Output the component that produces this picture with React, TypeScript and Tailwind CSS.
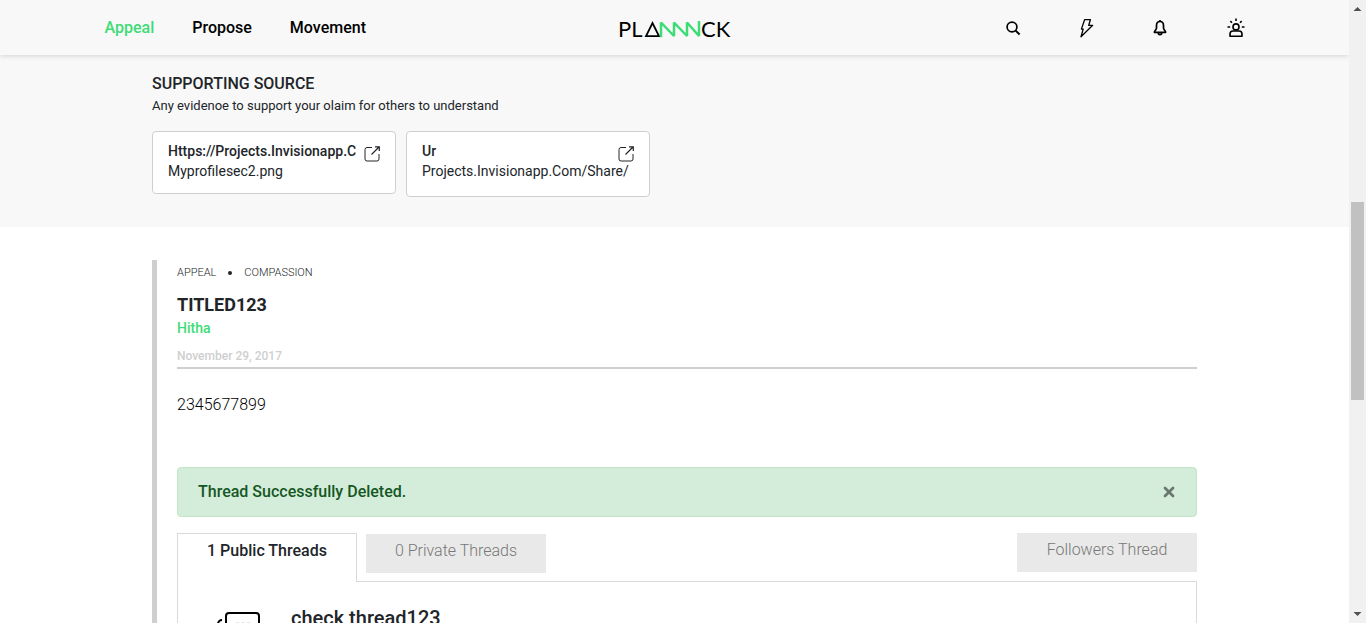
import type { ReactNode } from "react";
import { X } from "lucide-react";

function Logo() {
  return (
    <svg width="113" height="36" viewBox="0 -8 113 36" fill="none" role="img" aria-label="Plannnck">
      <g fill="#000" fontFamily="Lato, sans-serif" fontSize="22">
        <text x="0" y="17">PL</text>
        <text x="83" y="17">CK</text>
      </g>
      <path d="M28 16.200 34.500 3 41 16.200Z" stroke="#000" strokeWidth="1.800" />
      <path
        d="M43 17.200V2.500L56 16V2.500L69 16V2.500L81 16V1"
        stroke="#3ddc76"
        strokeWidth="2.500"
        strokeLinejoin="bevel"
      />
    </svg>
  );
}

function SearchIcon() {
  return (
    <svg width="16" height="20" viewBox="0 0 16 20" fill="none" stroke="#000" strokeWidth="1.700">
      <circle cx="7" cy="9" r="4.900" />
      <path d="m10.600 12.600 4 3.800" strokeWidth="2" />
    </svg>
  );
}

function BoltIcon() {
  return (
    <svg width="16" height="20" viewBox="0 0 16 20" fill="none" stroke="#000" strokeWidth="1.300" strokeLinejoin="round">
      <path d="M5.600 1.700h5.800L9.700 7.300h4L2 18.800l2.200-7.700H2.400Z" />
    </svg>
  );
}

function BellIcon() {
  return (
    <svg width="16" height="20" viewBox="0 0 16 20" fill="none" stroke="#000" strokeWidth="1.700" strokeLinejoin="round">
      <path d="M1.400 14.300c0-1.800 2.100-2.300 2.100-4.200V7.600C3.500 5 4.700 3.500 7 3.500s3.500 1.500 3.500 4.100v2.500c0 1.900 2.100 2.400 2.100 4.200Z" />
      <path d="M5.200 14.500c0 1.300.7 2.200 1.800 2.200s1.800-.9 1.800-2.200M7 2v1.500" />
    </svg>
  );
}

function UserIcon() {
  return (
    <svg width="18" height="20" viewBox="0 0 18 20" fill="none" stroke="#000" strokeWidth="1.600">
      <circle cx="9" cy="8.900" r="3" />
      <path d="M3 18.200v-2.200c0-1.900 1.200-3 3-3h6c1.800 0 3 1.100 3 3v2.200Z" strokeLinejoin="round" />
      <path d="M9 .4v2.600M3.300 3.100l1.700 1.700M14.700 3.100 13 4.800M.5 9h2.700M14.800 9h2.700" />
    </svg>
  );
}

function OpenIcon() {
  return (
    <svg width="16" height="16" viewBox="0 0 16 16" fill="none" stroke="#212529">
      <path d="M8 1.500H3a2 2 0 0 0-2 2V13a2 2 0 0 0 2 2h10a2 2 0 0 0 2-2V8" />
      <path d="M11 .8h4.300V5M15 1 7.500 8.500" strokeWidth="1.200" />
    </svg>
  );
}

function ChatIcon() {
  return (
    <svg width="46" height="40" viewBox="0 0 46 40" fill="none" stroke="#000" strokeWidth="2">
      <path d="M11 22V4a3 3 0 0 1 3-3h27a3 3 0 0 1 3 3v18a4 4 0 0 1-4 4H20l-5 5v-5a4 4 0 0 1-4-4Z" />
      <path d="M7 8a4 4 0 0 0-4 4v17a4 4 0 0 0 4 4v5l5-5h16" />
      <path d="M21 11.500h14" stroke="#999" strokeWidth="1.500" strokeDasharray="3 2.500" />
    </svg>
  );
}

function Header() {
  const actions: [string, ReactNode][] = [
    ["Search", <SearchIcon />],
    ["Activity", <BoltIcon />],
    ["Notifications", <BellIcon />],
    ["Account", <UserIcon />],
  ];
  return (
    <header className="relative h-[55px] shrink-0 bg-[#f8f8f8] shadow-[0_1px_5px_rgba(0,0,0,0.15)]">
      <div className="mx-auto grid h-full max-w-[1140px] grid-cols-[1fr_auto_1fr] items-center">
        <nav className="flex gap-[38px] text-base font-medium text-black">
          <a href="#appeal" className="text-[#3ddc76]">Appeal</a>
          <a href="#propose">Propose</a>
          <a href="#movement">Movement</a>
        </nav>
        <a href="#home" className="pt-1"><Logo /></a>
        <div className="flex items-center justify-end gap-[58px]">
          {actions.map(([label, icon]) => (
            <button key={label} type="button" aria-label={label}>{icon}</button>
          ))}
        </div>
      </div>
    </header>
  );
}

function SourceCard({ title, detail, className }: { title: string; detail: string; className: string }) {
  return (
    <a href="#source" className={`flex w-[244px] rounded border border-[#cfcfcf] bg-white px-[15px] pt-[9px] ${className}`}>
      <div className="min-w-0 flex-1">
        <div className="text-[14px] leading-5 font-medium whitespace-nowrap">{title}</div>
        <div className="text-[14px] leading-5 whitespace-nowrap">{detail}</div>
      </div>
      <div className="w-4 shrink-0 pt-[5px]"><OpenIcon /></div>
    </a>
  );
}

function Sources() {
  return (
    <section className="h-[172px] shrink-0 bg-[#f8f8f8] pt-[17px]">
      <div className="mx-auto max-w-[1045px]">
        <h2 className="text-base leading-6 font-medium">SUPPORTING SOURCE</h2>
        <p className="text-[13px] leading-5">Any evidenoe to support your olaim for others to understand</p>
        <div className="mt-[15px] flex items-start gap-2.5">
          <SourceCard title="Https://Projects.Invisionapp.C" detail="Myprofilesec2.png" className="h-[63px]" />
          <SourceCard title="Ur" detail="Projects.Invisionapp.Com/Share/" className="h-[66px]" />
        </div>
      </div>
    </section>
  );
}

function Threads() {
  return (
    <div className="mt-4">
      <div className="flex items-start" role="tablist">
        <button type="button" role="tab" aria-selected="true" className="relative z-10 -mb-px h-[49px] w-[180px] border border-b-0 border-[#d9d9d9] bg-white pb-3.5 text-base font-medium">
          1 Public Threads
        </button>
        <button type="button" role="tab" aria-selected="false" className="mt-px ml-[9px] h-[39px] w-[180px] bg-[#e9e9e9] pb-1.5 text-base font-light text-[#777]">
          0 Private Threads
        </button>
        <button type="button" role="tab" aria-selected="false" className="ml-auto h-[39px] w-[180px] bg-[#e9e9e9] pb-1.5 text-base font-light text-[#777]">
          Followers Thread
        </button>
      </div>
      <div className="flex h-[200px] border border-[#d9d9d9] pt-6 pl-[37px]">
        <div className="w-[76px] pt-1.5"><ChatIcon /></div>
        <h4 className="text-xl leading-6 font-medium">check thread123</h4>
      </div>
    </div>
  );
}

function Appeal() {
  return (
    <article className="mx-auto mt-[33px] w-full max-w-[1045px] border-l-[5px] border-[#cfcfcf] pl-5">
      <div className="flex items-center gap-3 pt-1 text-[11px] leading-[18px] font-light">
        <span>APPEAL</span>
        <span className="size-1 rounded-full bg-[#212529]" />
        <span>COMPASSION</span>
      </div>
      <h3 className="mt-2.5 text-[18px] leading-[26px] font-bold">TITLED123</h3>
      <a href="#author" className="block text-[14px] leading-5 font-medium text-[#3ddc76]">Hitha</a>
      <time dateTime="2017-11-29" className="mt-2 block border-b-2 border-[#cfcfcf] pb-px text-[12px] leading-5 font-medium text-[#cfcfcf]">
        November 29, 2017
      </time>
      <p className="mt-6 text-base leading-6 font-light text-black">2345677899</p>
      <div role="alert" className="mt-[50px] flex h-[50px] items-center justify-between rounded border border-[#c3e6cb] bg-[#d4edda] pr-[19px] pl-5 text-base font-medium text-[#155724]">
        Thread Successfully Deleted.
        <button type="button" aria-label="Close" className="text-[#6a776d]">
          <X size={16} strokeWidth={4} />
        </button>
      </div>
      <Threads />
    </article>
  );
}

function ScrollRail() {
  return (
    <div className="flex w-[17px] shrink-0 flex-col items-center bg-[#f1f1f1]" aria-hidden="true">
      <svg width="17" height="17" fill="#505050"><path d="m8.500 7 4 4h-8Z" /></svg>
      <div className="flex w-[13px] flex-1 flex-col">
        <div className="flex-[185]" />
        <div className="flex-[198] bg-[#c1c1c1]" />
        <div className="flex-[206]" />
      </div>
      <svg width="17" height="17" fill="#505050"><path d="m4.500 6h8l-4 4Z" /></svg>
    </div>
  );
}

export default function App() {
  return (
    <div className="flex h-screen overflow-hidden bg-white font-['Roboto',sans-serif] text-[#212529]">
      <main className="flex min-w-0 flex-1 flex-col overflow-hidden">
        <Header />
        <Sources />
        <Appeal />
      </main>
      <ScrollRail />
    </div>
  );
}
